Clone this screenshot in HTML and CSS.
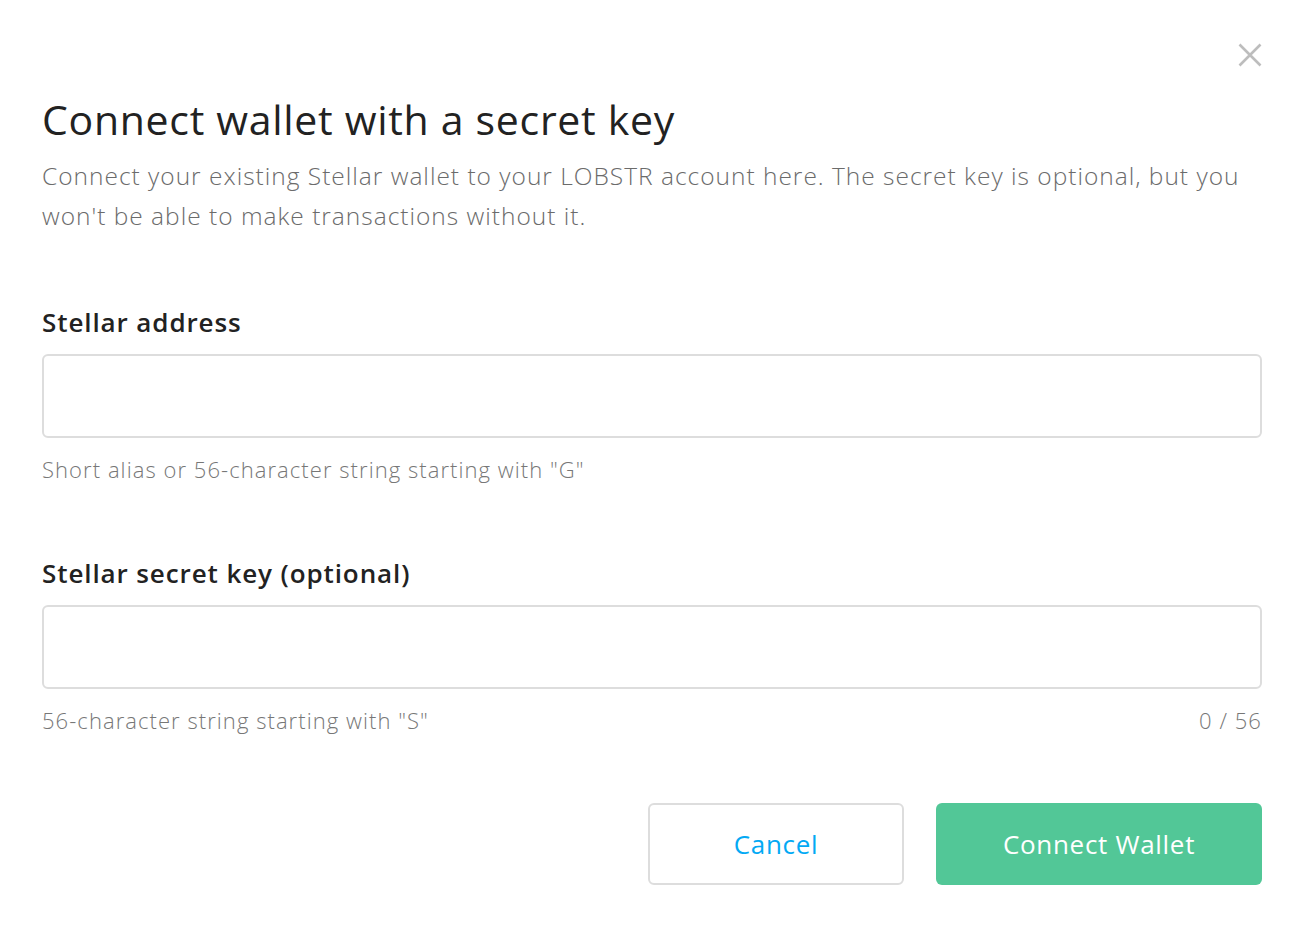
FILE: index.html
```html
<!DOCTYPE html>
<html lang="en">
<head>
<meta charset="utf-8">
<title>Connect wallet with a secret key</title>
<link rel="stylesheet" href="styles.css">
</head>
<body>
<div class="modal">
  <div class="modal-top">
    <button class="close" aria-label="Close">
      <svg width="24" height="24" viewBox="0 0 24 24"><path d="M1.5 1.5 L22.5 22.5 M22.5 1.5 L1.5 22.5" stroke="#bdbdbd" stroke-width="2.6" fill="none"/></svg>
    </button>
  </div>
  <h1 class="title">Connect wallet with a secret key</h1>
  <p class="desc">Connect your existing Stellar wallet to your LOBSTR account here. The secret key is optional, but you won't be able to make transactions without it.</p>

  <div class="field field-first">
    <label class="label">Stellar address</label>
    <div class="input"></div>
    <div class="hint-row"><span class="hint">Short alias or 56-character string starting with "G"</span></div>
  </div>

  <div class="field">
    <label class="label">Stellar secret key (optional)</label>
    <div class="input"></div>
    <div class="hint-row"><span class="hint">56-character string starting with "S"</span><span class="hint">0 / 56</span></div>
  </div>

  <div class="actions">
    <button class="btn btn-cancel">Cancel</button>
    <button class="btn btn-primary">Connect Wallet</button>
  </div>
</div>
</body>
</html>
```

FILE: styles.css
```css
html, body {
  margin: 0;
  padding: 0;
  background: #ffffff;
}
body {
  font-family: "Open Sans", "Noto Sans", sans-serif;
  color: #222222;
}
.modal {
  padding: 43px 44px 0 42px;
}
.modal-top {
  display: flex;
  justify-content: flex-end;
  height: 24px;
}
.close {
  border: 0;
  background: none;
  padding: 0;
  margin-right: 0;
  width: 24px;
  height: 24px;
  cursor: pointer;
}
.close svg { display: block; }
.title {
  margin: 26px 0 0 0;
  font-size: 41px;
  line-height: 52px;
  font-weight: 400;
  color: #222222;
  letter-spacing: 0.7px;
}
.desc {
  margin: 11px 0 0 0;
  font-size: 24.5px;
  line-height: 40px;
  font-weight: 300;
  color: #6b6b6b;
  letter-spacing: 0.99px;
}
.field { margin-top: 70px; }
.field.field-first { margin-top: 68px; }
.label {
  display: block;
  font-size: 26px;
  line-height: 36px;
  font-weight: 600;
  color: #222222;
  letter-spacing: 0.9px;
}
.input {
  margin-top: 14px;
  height: 80px;
  border: 2px solid #dddddd;
  border-radius: 6px;
}
.hint-row {
  display: flex;
  justify-content: space-between;
  margin-top: 15px;
}
.hint {
  font-size: 22px;
  line-height: 32px;
  font-weight: 300;
  color: #777777;
  letter-spacing: 1.06px;
}
.actions {
  display: flex;
  justify-content: flex-end;
  gap: 32px;
  margin-top: 67px;
}
.btn {
  height: 82px;
  border-radius: 6px;
  font-family: "Open Sans", "Noto Sans", sans-serif;
  font-size: 26px;
  font-weight: 400;
  letter-spacing: 0.7px;
  cursor: pointer;
}
.btn-cancel {
  width: 256px;
  background: #ffffff;
  border: 2px solid #dddddd;
  color: #03a9f4;
}
.btn-primary {
  width: 326px;
  background: #52c797;
  border: 0;
  color: #ffffff;
}
```
